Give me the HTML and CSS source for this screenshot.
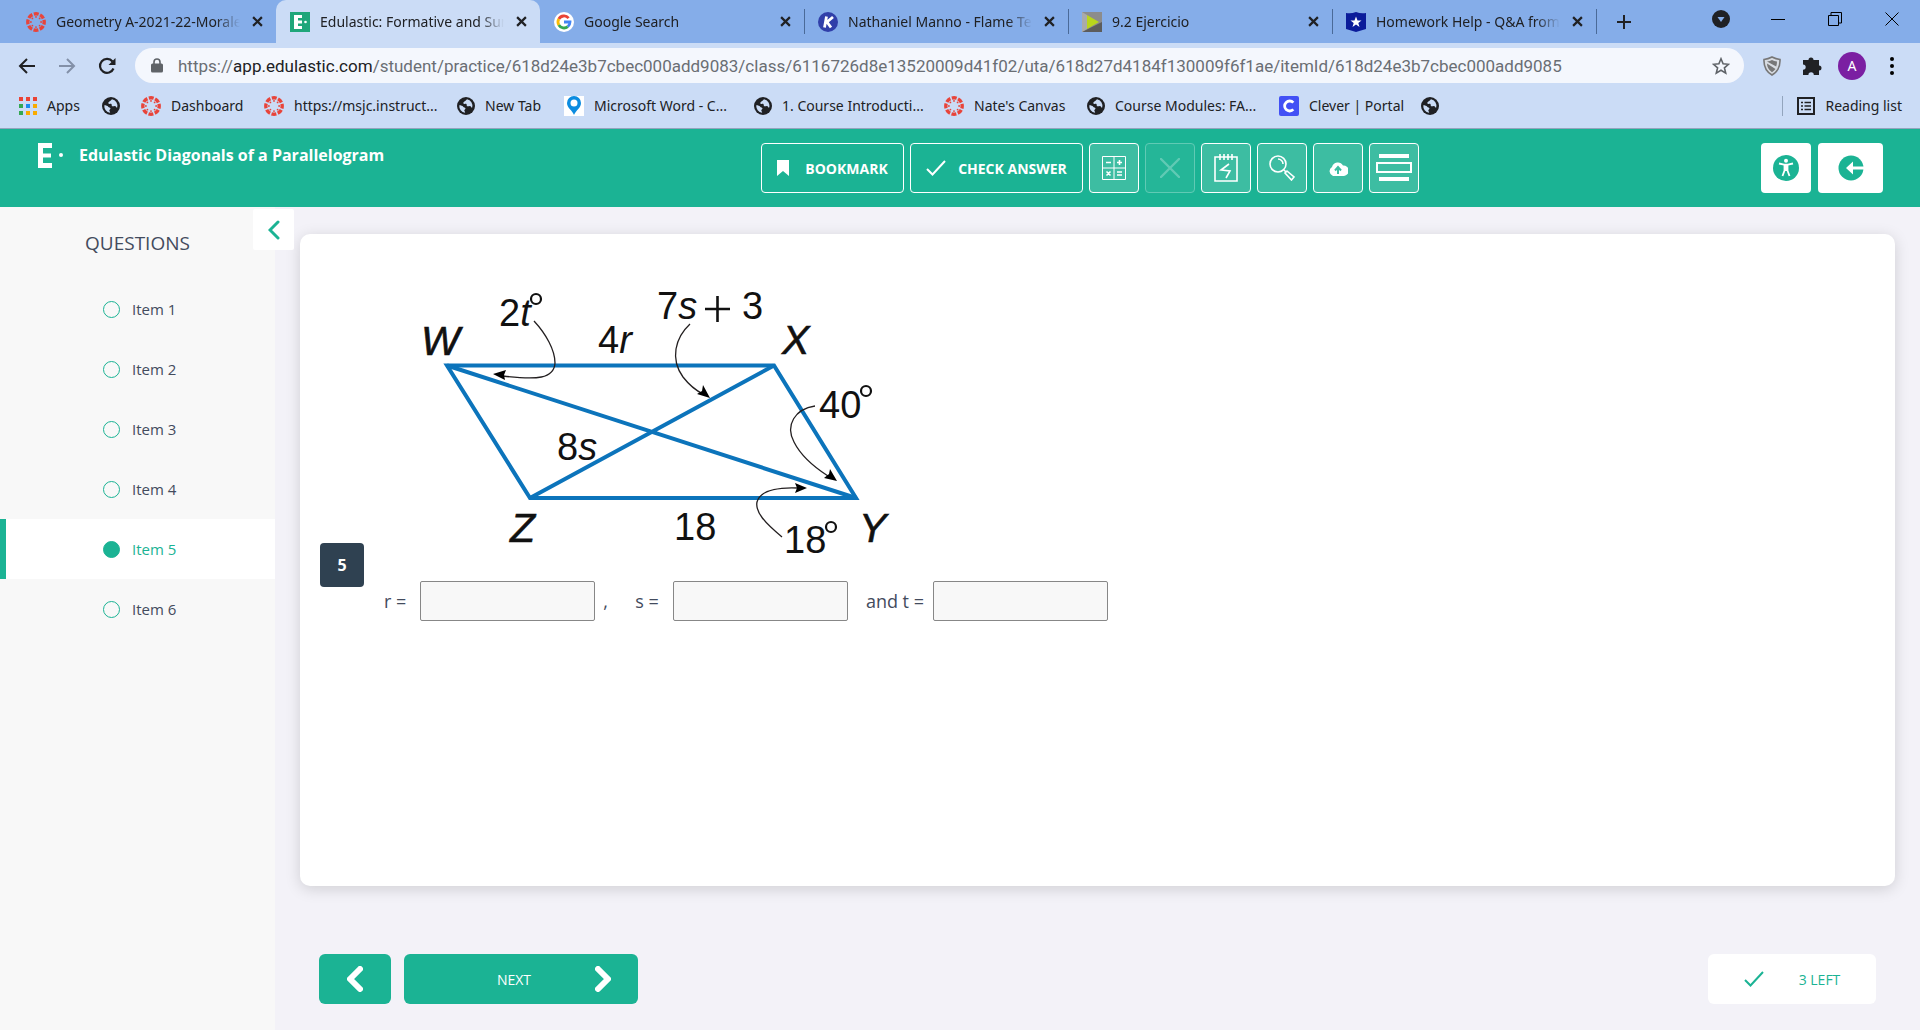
FILE: index.html
```html
<!DOCTYPE html>
<html lang="en">
<head>
<meta charset="utf-8">
<meta name="viewport" content="width=device-width, initial-scale=1">
<title>Edulastic: Formative and Summative Assessments</title>
<link rel="stylesheet" href="styles.css">
</head>
<body>
<svg class="defs" aria-hidden="true">
  <symbol id="canvas" viewBox="0 0 20 20">
    <circle cx="10" cy="10" r="8.2" fill="none" stroke="#e8443a" stroke-width="3.4" stroke-dasharray="4.9 1.54" stroke-dashoffset="2.45"/>
    <g fill="#e8443a"><circle cx="10" cy="4.9" r=".9"/><circle cx="10" cy="15.1" r=".9"/><circle cx="4.9" cy="10" r=".9"/><circle cx="15.1" cy="10" r=".9"/><circle cx="6.4" cy="6.4" r=".9"/><circle cx="13.6" cy="6.4" r=".9"/><circle cx="6.4" cy="13.6" r=".9"/><circle cx="13.6" cy="13.6" r=".9"/></g>
  </symbol>
  <symbol id="globe" viewBox="0 0 18 18">
    <circle cx="9" cy="9" r="9" fill="#202124"/>
    <path d="M10 2.200C9 3.400 8.200 4 6.800 5c-.9.700-.4 1.900.5 2 .9.100 1.500-.5 2.200.2.700.8-.2 1.600.7 2 1.200.4 2.400-.6 3.300 0 .9.700.3 1.500 1.700 1.400a6.800 6.800 0 0 0-5.200-8.400zM2.300 8.200c1.700 0 3.300.5 3.900 1.500.5.900 2.300.8 2.300 1.800s-1.300 1-1.200 2c.1.800.9 1.100.8 2.200A6.800 6.800 0 0 1 2.300 8.200z" fill="#cbdcf6"/>
  </symbol>
  <symbol id="close" viewBox="0 0 10 10"><path d="M1 1l8 8M9 1L1 9" fill="none" stroke="#202124" stroke-width="2"/></symbol>
  <symbol id="tick" viewBox="0 0 20 20"><path d="M1 11l5.500 5.500L19 3" fill="none" stroke="currentColor" stroke-width="2"/></symbol>
  <symbol id="chev" viewBox="0 0 16 26"><path d="M13 3L3 13l10 10" fill="none" stroke="currentColor" stroke-width="6" stroke-linecap="round" stroke-linejoin="round"/></symbol>
</svg>

<div class="browser">
  <div class="tabstrip">
    <div class="tab">
      <svg class="fav"><use href="#canvas"/></svg><span class="tab-title">Geometry A-2021-22-Morales</span>
      <button class="tab-close" aria-label="Close tab"><svg><use href="#close"/></svg></button>
    </div>
    <div class="tab active">
      <svg class="fav" viewBox="0 0 20 20"><path fill="#1fa67a" d="M0 0h20v20H0z"/><path d="M4 3h8v3H8v2.500h4v3H8V14h4v3H4z" fill="#fff"/><circle cx="15.500" cy="10" r="1.300" fill="#fff"/></svg><span class="tab-title">Edulastic: Formative and Summative</span>
      <button class="tab-close" aria-label="Close tab"><svg><use href="#close"/></svg></button>
    </div>
    <div class="tab">
      <svg class="fav" viewBox="0 0 20 20"><circle cx="10" cy="10" r="10" fill="#fff"/><g fill="none" stroke-width="2.800"><path d="M14.600 6.100A6 6 0 0 0 4.800 7" stroke="#ea4335"/><path d="M4.800 7a6 6 0 0 0 0 6" stroke="#fbbc05"/><path d="M4.800 13a6 6 0 0 0 9 1.600" stroke="#34a853"/><path d="M10 10h6a6 6 0 0 1-2.200 4.600" stroke="#4285f4"/></g></svg><span class="tab-title">Google Search</span>
      <button class="tab-close" aria-label="Close tab"><svg><use href="#close"/></svg></button>
    </div>
    <div class="tab ruled">
      <svg class="fav" viewBox="0 0 20 20"><circle cx="10" cy="10" r="10" fill="#303fa9"/><path d="M6.500 15.500L8.500 4.500M15 5l-6 5 4 5.500" fill="none" stroke="#fff" stroke-width="2.800"/></svg><span class="tab-title">Nathaniel Manno - Flame Test</span>
      <button class="tab-close" aria-label="Close tab"><svg><use href="#close"/></svg></button>
    </div>
    <div class="tab ruled">
      <svg class="fav" viewBox="0 0 20 20"><path fill="#8c8c8c" d="M0 0h20v20H0z"/><path fill="#5c5c5c" d="M0 20l20-10v10z"/><path fill="#aaa" d="M0 0l5 3v14l-5 3z"/><path fill="#b9d51c" d="M5 3l12 7-12 7z"/></svg><span class="tab-title">9.2 Ejercicio</span>
      <button class="tab-close" aria-label="Close tab"><svg><use href="#close"/></svg></button>
    </div>
    <div class="tab ruled">
      <svg class="fav" viewBox="0 0 20 20"><path fill="#0b1c9a" d="M0 1q5 1 10-1 5 2 10 1v16l-10 3-10-3z"/><path fill="#fff" d="M10 4.500l1.500 4h4l-3.200 2.400 1.200 4L10 12.600l-3.500 2.300 1.200-4L4.500 8.500h4z"/></svg><span class="tab-title">Homework Help - Q&amp;A from</span>
      <button class="tab-close" aria-label="Close tab"><svg><use href="#close"/></svg></button>
    </div>
    <div class="newtab ruled">
      <button aria-label="New tab"><svg width="14" height="14" viewBox="0 0 14 14"><path d="M7 0v14M0 7h14" stroke="#202124" stroke-width="2"/></svg></button>
    </div>
    <div class="window-controls">
      <button aria-label="Search tabs"><svg width="18" height="18" viewBox="0 0 18 18"><circle cx="9" cy="9" r="9" fill="#202124"/><path d="M5.500 7h7L9 12z" fill="#85ade9"/></svg></button>
      <button aria-label="Minimize"><svg width="14" height="14" viewBox="0 0 14 14"><path d="M0 7.500h14" stroke="#000"/></svg></button>
      <button aria-label="Restore"><svg width="14" height="14" viewBox="0 0 14 14"><path d="M.5 3.500h10v10H.5zM3 3V.5h10.500V11H11" fill="none" stroke="#000"/></svg></button>
      <button aria-label="Close window"><svg width="14" height="14" viewBox="0 0 14 14"><path d="M.5.5l13 13M13.500.5l-13 13" stroke="#000"/></svg></button>
    </div>
  </div>

  <div class="toolbar">
    <button aria-label="Back"><svg width="18" height="16" viewBox="0 0 18 16"><path d="M17 8H2M9 1L2 8l7 7" fill="none" stroke="#202124" stroke-width="2"/></svg></button>
    <button aria-label="Forward"><svg width="18" height="16" viewBox="0 0 18 16"><path d="M1 8h15M9 1l7 7-7 7" fill="none" stroke="#8390a8" stroke-width="2"/></svg></button>
    <button aria-label="Reload"><svg width="18" height="18" viewBox="0 0 18 18"><path d="M15.500 11.500A7 7 0 1 1 14.500 4.500" fill="none" stroke="#202124" stroke-width="2.200"/><path d="M17.500 1v7h-7z" fill="#202124"/></svg></button>
    <div class="omnibox">
      <svg width="12" height="15" viewBox="0 0 12 15"><path d="M3 6V4a3 3 0 0 1 6 0v2" fill="none" stroke="#5f6368" stroke-width="1.600"/><rect y="5.500" width="12" height="9" rx="1.500" fill="#5f6368"/></svg>
      <div class="url" role="textbox" contenteditable="true" spellcheck="false" aria-label="Address">https://<span class="host">app.edulastic.com</span>/student/practice/618d24e3b7cbec000add9083/class/6116726d8e13520009d41f02/uta/618d27d4184f130009f6f1ae/itemId/618d24e3b7cbec000add9085</div>
      <button aria-label="Bookmark this tab"><svg width="18" height="18" viewBox="0 0 18 18"><path d="M9 1.800l2.100 5 5.400.5-4.100 3.500 1.300 5.300L9 13.300l-4.700 2.800 1.300-5.300L1.500 7.300l5.400-.5z" fill="none" stroke="#5f6368" stroke-width="1.600"/></svg></button>
    </div>
    <button aria-label="Shield extension"><svg width="18" height="20" viewBox="0 0 18 20"><path d="M9 1q4 2 8 2.500Q17.500 14 9 19 .500 14 1 3.500 5 3 9 1z" fill="#d8dce2" stroke="#777" stroke-width="1.600"/><path d="M4 5.500q3-.5 5-1.500 2 1 5 1.500 0 3-.8 5zM4 7.500l8.500 5.500Q11 15 9 16.200 4 13 4 7.500z" fill="#777"/></svg></button>
    <button aria-label="Extensions"><svg width="20" height="20" viewBox="0 0 20 20"><path d="M1 4h5.500a2.500 2.500 0 1 1 5 0H17v5.500a2.500 2.500 0 1 1 0 5V19h-5.200a2.700 2.700 0 0 0-5.400 0H1v-5.200a2.700 2.700 0 0 0 0-5.400z" fill="#202124"/></svg></button>
    <button class="avatar" aria-label="Profile">A</button>
    <button aria-label="Menu"><svg width="4" height="18" viewBox="0 0 4 18"><circle cx="2" cy="2" r="2"/><circle cx="2" cy="9" r="2"/><circle cx="2" cy="16" r="2"/></svg></button>
  </div>

  <nav class="bookmarks" aria-label="Bookmarks">
    <a href="#"><svg width="18" height="18" viewBox="0 0 18 18"><g fill="#ea4335"><path d="M0 0h4v4H0zM7 0h4v4H7zM14 0h4v4h-4z"/></g><path fill="#34a853" d="M0 7h4v4H0zM0 14h4v4H0z"/><path fill="#1a8cf0" d="M7 7h4v4H7z"/><path fill="#f9ab00" d="M14 7h4v4h-4zM7 14h4v4H7zM14 14h4v4h-4z"/></svg>Apps</a>
    <a href="#" aria-label="Bookmark"><svg width="18" height="18"><use href="#globe"/></svg></a>
    <a href="#"><svg width="20" height="20"><use href="#canvas"/></svg>Dashboard</a>
    <a href="#"><svg width="20" height="20"><use href="#canvas"/></svg>https://msjc.instruct...</a>
    <a href="#"><svg width="18" height="18"><use href="#globe"/></svg>New Tab</a>
    <a href="#"><svg width="20" height="20" viewBox="0 0 20 20"><path fill="#fff" d="M0 0h20v20H0z"/><path fill="#0c8ce0" d="M10 19C8 14 3 12 3 7a7 7 0 0 1 14 0c0 5-5 7-7 12z"/><circle cx="10" cy="7" r="3.500" fill="#fff"/></svg>Microsoft Word - C...</a>
    <a href="#"><svg width="18" height="18"><use href="#globe"/></svg>1. Course Introducti...</a>
    <a href="#"><svg width="20" height="20"><use href="#canvas"/></svg>Nate's Canvas</a>
    <a href="#"><svg width="18" height="18"><use href="#globe"/></svg>Course Modules: FA...</a>
    <a href="#"><svg width="20" height="20" viewBox="0 0 20 20"><rect width="20" height="20" rx="2" fill="#4250f5"/><path d="M14.300 6.600A5 5 0 1 0 14.300 13.400" fill="none" stroke="#fff" stroke-width="2.800"/></svg>Clever | Portal</a>
    <a href="#" aria-label="Bookmark"><svg width="18" height="18"><use href="#globe"/></svg></a>
    <a href="#" class="reading"><svg width="18" height="18" viewBox="0 0 18 18"><path d="M1 1h16v16H1z" fill="none" stroke="#202124" stroke-width="2"/><path d="M4 5.500h2M4 9h2M4 12.500h2M7.500 5.500H14M7.500 9H14M7.500 12.500H14" stroke="#202124" stroke-width="1.600"/></svg>Reading list</a>
  </nav>
</div>

<header class="app-header">
  <div class="brand">
    <svg width="26" height="26" viewBox="0 0 26 26" aria-hidden="true"><path d="M0 0h14v5H5v5.500h8v4H5V20h9v5H0z" fill="#fff"/><circle cx="23" cy="12" r="2" fill="#fff"/></svg>
    <h1>Edulastic Diagonals of a Parallelogram</h1>
  </div>
  <div class="tools">
    <button class="tool bookmark"><svg width="12" height="16" viewBox="0 0 12 16"><path d="M0 0h12v16l-6-5-6 5z" fill="#fff"/></svg>BOOKMARK</button>
    <button class="tool check"><svg width="20" height="20"><use href="#tick"/></svg>CHECK ANSWER</button>
    <button class="tool square" aria-label="Calculator"><svg width="24" height="24" viewBox="0 0 24 24" fill="none" stroke="#fff"><path d="M.5.5h23v23H.5zM12 0v24M0 12h24"/><path d="M4 6.500h5M15 6.500h5M17.500 4v5M4.500 15.500l4 4M8.500 15.500l-4 4M15 16h5M15 19h5" stroke-width="1.600"/></svg></button>
    <button class="tool square disabled" aria-label="Cross out" disabled><svg width="20" height="20" viewBox="0 0 20 20"><path d="M1 1l18 18M19 1L1 19" fill="none" stroke="#fff" stroke-width="2.400" stroke-linecap="round"/></svg></button>
    <button class="tool square" aria-label="Scratchpad"><svg width="24" height="30" viewBox="0 0 24 30" fill="none" stroke="#fff" stroke-width="1.600"><path d="M1 4h22v24H1zM6 1v6M10 1v6M14 1v6M18 1v6"/><path d="M15 11l-8 6 9 1-4 7"/></svg></button>
    <button class="tool square" aria-label="Magnify"><svg width="26" height="26" viewBox="0 0 26 26" fill="none" stroke="#fff" stroke-width="1.600"><circle cx="9" cy="9" r="8"/><path d="M9 4a5 5 0 0 1 5 5M15 15l2 2M18 16l7 6-2.500 3-6.500-7z"/></svg></button>
    <button class="tool square" aria-label="Upload work"><svg width="20" height="15" viewBox="0 0 20 15"><path d="M5 15a5 5 0 0 1-1-9 6 6 0 0 1 11-1.500A5 5 0 0 1 16 15z" fill="#fff"/><path d="M10 13V7M7 9.500L10 6l3 3.500" fill="none" stroke="#3dbda2" stroke-width="2"/></svg></button>
    <button class="tool square" aria-label="Line reader"><svg width="36" height="28" viewBox="0 0 36 28"><path d="M3 0h30v4H3zM3 23h30v4H3z" fill="#fff"/><path d="M1 9h34v9H1z" fill="none" stroke="#fff" stroke-width="2"/></svg></button>
  </div>
  <div class="actions">
    <button class="access" aria-label="Accessibility"><svg width="26" height="26" viewBox="0 0 26 26"><circle cx="13" cy="13" r="13" fill="#1bb394"/><circle cx="13" cy="5.800" r="2" fill="#fff"/><path d="M6 8.500l5 1.200h4l5-1.200M11.500 10v5.500L9.500 21M14.500 10v5.500l2 5.500" fill="none" stroke="#fff" stroke-width="1.800"/><path d="M11 9.500h4V16h-4z" fill="#fff"/></svg></button>
    <button class="exit" aria-label="Exit"><svg width="26" height="26" viewBox="0 0 26 26"><circle cx="13" cy="13" r="12.500" fill="#1bb394"/><path d="M8 13l7-6.500v5h11v3H15v5z" fill="#fff"/></svg></button>
  </div>
</header>

<div class="workspace">
  <aside class="sidebar">
    <button class="collapse" aria-label="Collapse questions"><svg width="12" height="20" viewBox="0 0 12 20"><path d="M10 2l-8 8 8 8" fill="none" stroke="#1bb394" stroke-width="3" stroke-linecap="round"/></svg></button>
    <h2>QUESTIONS</h2>
    <ul>
      <li><a href="#">Item 1</a></li>
      <li><a href="#">Item 2</a></li>
      <li><a href="#">Item 3</a></li>
      <li><a href="#">Item 4</a></li>
      <li><a href="#" class="current" aria-current="page">Item 5</a></li>
      <li><a href="#">Item 6</a></li>
    </ul>
  </aside>

  <main>
    <section class="card">
      <span class="number">5</span>
      <div class="question">
        <svg class="figure" width="500" height="300" viewBox="0 0 500 300" role="img" aria-label="Parallelogram WXYZ with diagonals">
          <g fill="none" stroke="#0c74bb" stroke-width="4"><path d="M47 95.500h327l82 132.500H130z"/><path d="M47 95.500l409 132.500M374 95.500L130 228"/></g>
          <g fill="none" stroke="#231f20" stroke-width="1.300">
            <path d="M134 51C146 64 155 80 155 93c-1 16-18 17-52 13"/>
            <path d="M290 54c-15 14-20 35-7 53 7 9 12 13 20 17"/>
            <path d="M415 136c-20 3-30 19-21 36 7 14 20 25 34 34"/>
            <path d="M382 267c-17-14-27-25-25-35 3-11 17-15 41-14"/>
          </g>
          <g fill="#000"><path d="M93 104l13-4-2 5 1 5zM310 128l-13-4 5-3 1-6zM437 211l-13-3 5-4 1-5zM407 218l-12 5 2-5-2-5z"/></g>
          <g class="figure-text" font-size="38">
            <g font-size="41" font-style="italic" stroke="#111" stroke-width=".6"><text x="21" y="85">W</text><text x="382" y="84">X</text><text x="110" y="272">Z</text><text x="459" y="272">Y</text></g>
            <text x="99" y="56">2<tspan font-style="italic">t</tspan></text>
            <text x="198" y="83">4<tspan font-style="italic">r</tspan></text>
            <text x="257" y="49">7<tspan font-style="italic">s</tspan></text>
            <text x="342" y="49">3</text>
            <text x="157" y="190">8<tspan font-style="italic">s</tspan></text>
            <text x="419" y="148">40</text>
            <text x="274" y="270">18</text>
            <text x="384" y="283">18</text>
          </g>
          <g fill="none" stroke="#111" stroke-width="2.200"><circle cx="136" cy="29" r="5"/><circle cx="466" cy="121" r="5"/><circle cx="431" cy="257" r="5"/><path d="M305 39h25M317.500 26v26" stroke-width="2.600"/></g>
        </svg>
        <div class="answers">
          <label for="r">r =</label><input id="r" type="text"><span class="comma">,</span>
          <label for="s">s =</label><input id="s" type="text">
          <label for="t" class="last">and t =</label><input id="t" type="text">
        </div>
      </div>
    </section>
    <footer>
      <button class="prev" aria-label="Previous"><svg width="16" height="26"><use href="#chev"/></svg></button>
      <button class="next"><span>NEXT</span><svg class="flip" width="16" height="26"><use href="#chev"/></svg></button>
      <button class="left"><svg width="20" height="20"><use href="#tick"/></svg>3 LEFT</button>
    </footer>
  </main>
</div>
</body>
</html>
```
FILE: styles.css
```css
* { box-sizing: border-box; }

body {
  margin: 0;
  min-height: 100vh;
  display: flex;
  flex-direction: column;
  background: #f3f2f8;
  color: #434b5d;
  font-family: "Open Sans", sans-serif;
}

button {
  display: flex;
  align-items: center;
  justify-content: center;
  padding: 0;
  border: 0;
  background: none;
  font: inherit;
  color: inherit;
}

svg { flex: none; }
a { color: inherit; text-decoration: none; }
.defs { display: none; }

/* Browser window */
.browser {
  background: #cbdcf6;
  border-bottom: 1px solid #93a5bd;
  color: #202124;
  font-family: "Noto Sans", sans-serif;
  font-size: 14px;
}

.tabstrip {
  display: flex;
  height: 43px;
  padding-left: 12px;
  background: #85ade9;
}

.tab {
  display: flex;
  align-items: center;
  flex: 0 1 264px;
  min-width: 0;
  padding: 0 12px 0 14px;
  position: relative;
}

.tab.active { background: #cbdcf6; border-radius: 10px 10px 0 0; }
.fav { width: 20px; height: 20px; }

.tab-title {
  flex: 1;
  min-width: 0;
  margin: 0 10px;
  overflow: hidden;
  white-space: nowrap;
  mask-image: linear-gradient(to right, #000 calc(100% - 24px), transparent);
}

.tab-close { width: 14px; }
.tab-close svg { width: 11px; height: 11px; }

.ruled::before {
  content: "";
  position: absolute;
  left: 0;
  top: 9px;
  width: 1px;
  height: 25px;
  background: #4a6a98;
}

.newtab { position: relative; display: flex; width: 56px; justify-content: center; }
.window-controls { display: flex; margin-left: auto; padding-bottom: 5px; }
.window-controls button { width: 57px; }

.toolbar {
  display: flex;
  align-items: center;
  height: 45px;
  padding: 0 8px 0 7px;
}

.toolbar > button { width: 40px; height: 36px; }

.omnibox {
  display: flex;
  align-items: center;
  flex: 1;
  min-width: 0;
  height: 35px;
  margin: 0 8px;
  padding: 0 14px 0 16px;
  border-radius: 18px;
  background: #f4f7fd;
}

.url {
  flex: 1;
  min-width: 0;
  margin-left: 15px;
  overflow: hidden;
  white-space: nowrap;
  color: #6a6e74;
  font-family: Roboto, sans-serif;
  font-size: 17px;
}

.host { color: #202124; }

.toolbar > .avatar {
  width: 28px;
  height: 28px;
  margin: 0 6px;
  border-radius: 50%;
  background: #7b1fa2;
  color: #fff;
}

.bookmarks {
  display: grid;
  grid-template-columns: 83px 39px 123px 193px 107px 190px 190px 143px 192px 142px 40px 1fr;
  align-items: center;
  height: 40px;
  padding: 0 18px 5px 19px;
  white-space: nowrap;
}

.bookmarks a { display: flex; align-items: center; gap: 10px; }
.bookmarks .reading { justify-self: end; border-left: 1px solid #93a5bd; padding-left: 14px; height: 20px; }

/* Application header */
.app-header {
  display: grid;
  grid-template-columns: 723px 1fr auto;
  padding: 14px 37px 14px 38px;
  background: #1bb394;
  color: #fff;
}

.brand { display: flex; gap: 15px; }
h1 { margin: 0; font-size: 16px; line-height: 24px; font-weight: 700; }
.tools { display: flex; gap: 6px; }

.tool {
  height: 50px;
  border: 1px solid #fff;
  border-radius: 4px;
  font-size: 14px;
  font-weight: 700;
}

.bookmark { width: 143px; gap: 16px; }
.check { width: 173px; gap: 12px; }
.square { width: 50px; background: #3dbda2; }
.disabled { opacity: 0.3; }
.actions { display: flex; gap: 7px; }
.actions button { height: 50px; border-radius: 4px; background: #fff; }
.access { width: 50px; }
.exit { width: 65px; }

/* Question list */
.workspace { display: flex; flex: 1; }

.sidebar {
  position: relative;
  flex: none;
  width: 275px;
  background: #f8f8f8;
}

.collapse {
  position: absolute;
  right: -19px;
  top: 2px;
  width: 41px;
  height: 41px;
  border-radius: 2px;
  background: #fff;
}

h2 {
  margin: 24px 0;
  font-size: 19px;
  line-height: 24px;
  font-weight: 400;
  text-align: center;
}

.sidebar ul { margin: 0; padding: 0; list-style: none; }

.sidebar li a {
  display: flex;
  align-items: center;
  gap: 12px;
  height: 60px;
  padding-left: 97px;
  border-left: 6px solid transparent;
  font-size: 15px;
}

.sidebar li a::before {
  content: "";
  width: 15px;
  height: 15px;
  border: 1px solid #1bb394;
  border-radius: 50%;
}

.sidebar .current { background: #fff; border-left-color: #1bb394; color: #1bb394; }
.sidebar .current::before { background: #1bb394; }

/* Question */
main {
  display: flex;
  flex-direction: column;
  flex: 1;
  min-width: 0;
  padding: 27px 25px 26px;
}

.card {
  display: flex;
  align-items: flex-start;
  flex: 1;
  gap: 20px;
  padding: 36px 20px;
  border-radius: 10px;
  background: #fff;
  box-shadow: 0 3px 15px rgba(0, 0, 0, 0.15);
}

.number {
  width: 44px;
  margin-top: 273px;
  border-radius: 4px;
  background: #2f4151;
  color: #fff;
  font-size: 16px;
  line-height: 44px;
  font-weight: 700;
  text-align: center;
}

.figure { display: block; margin-left: 16px; }
.figure-text { font-family: "Liberation Sans Narrow", "Liberation Sans", sans-serif; fill: #111; }
.answers { display: flex; align-items: center; margin-top: 11px; font-size: 18px; }

.answers input {
  width: 175px;
  height: 40px;
  margin-left: 14px;
  padding: 0 10px;
  border: 1px solid #878787;
  border-radius: 2px;
  background: #f8f8f8;
  font: inherit;
}

.comma { width: 40px; padding-left: 8px; }
.answers .last { margin-left: 18px; }
.answers .last + input { margin-left: 9px; }

footer {
  display: flex;
  gap: 13px;
  margin-top: 68px;
  padding: 0 19px;
  font-size: 14px;
}

footer button { height: 50px; border-radius: 6px; background: #1bb394; color: #fff; }
.prev { width: 72px; }
.next { width: 234px; justify-content: flex-end; gap: 64px; padding-right: 27px; }
.flip { transform: scaleX(-1); }
.left { width: 168px; margin-left: auto; gap: 35px; }
footer .left { background: #fff; color: #1bb394; }
```
